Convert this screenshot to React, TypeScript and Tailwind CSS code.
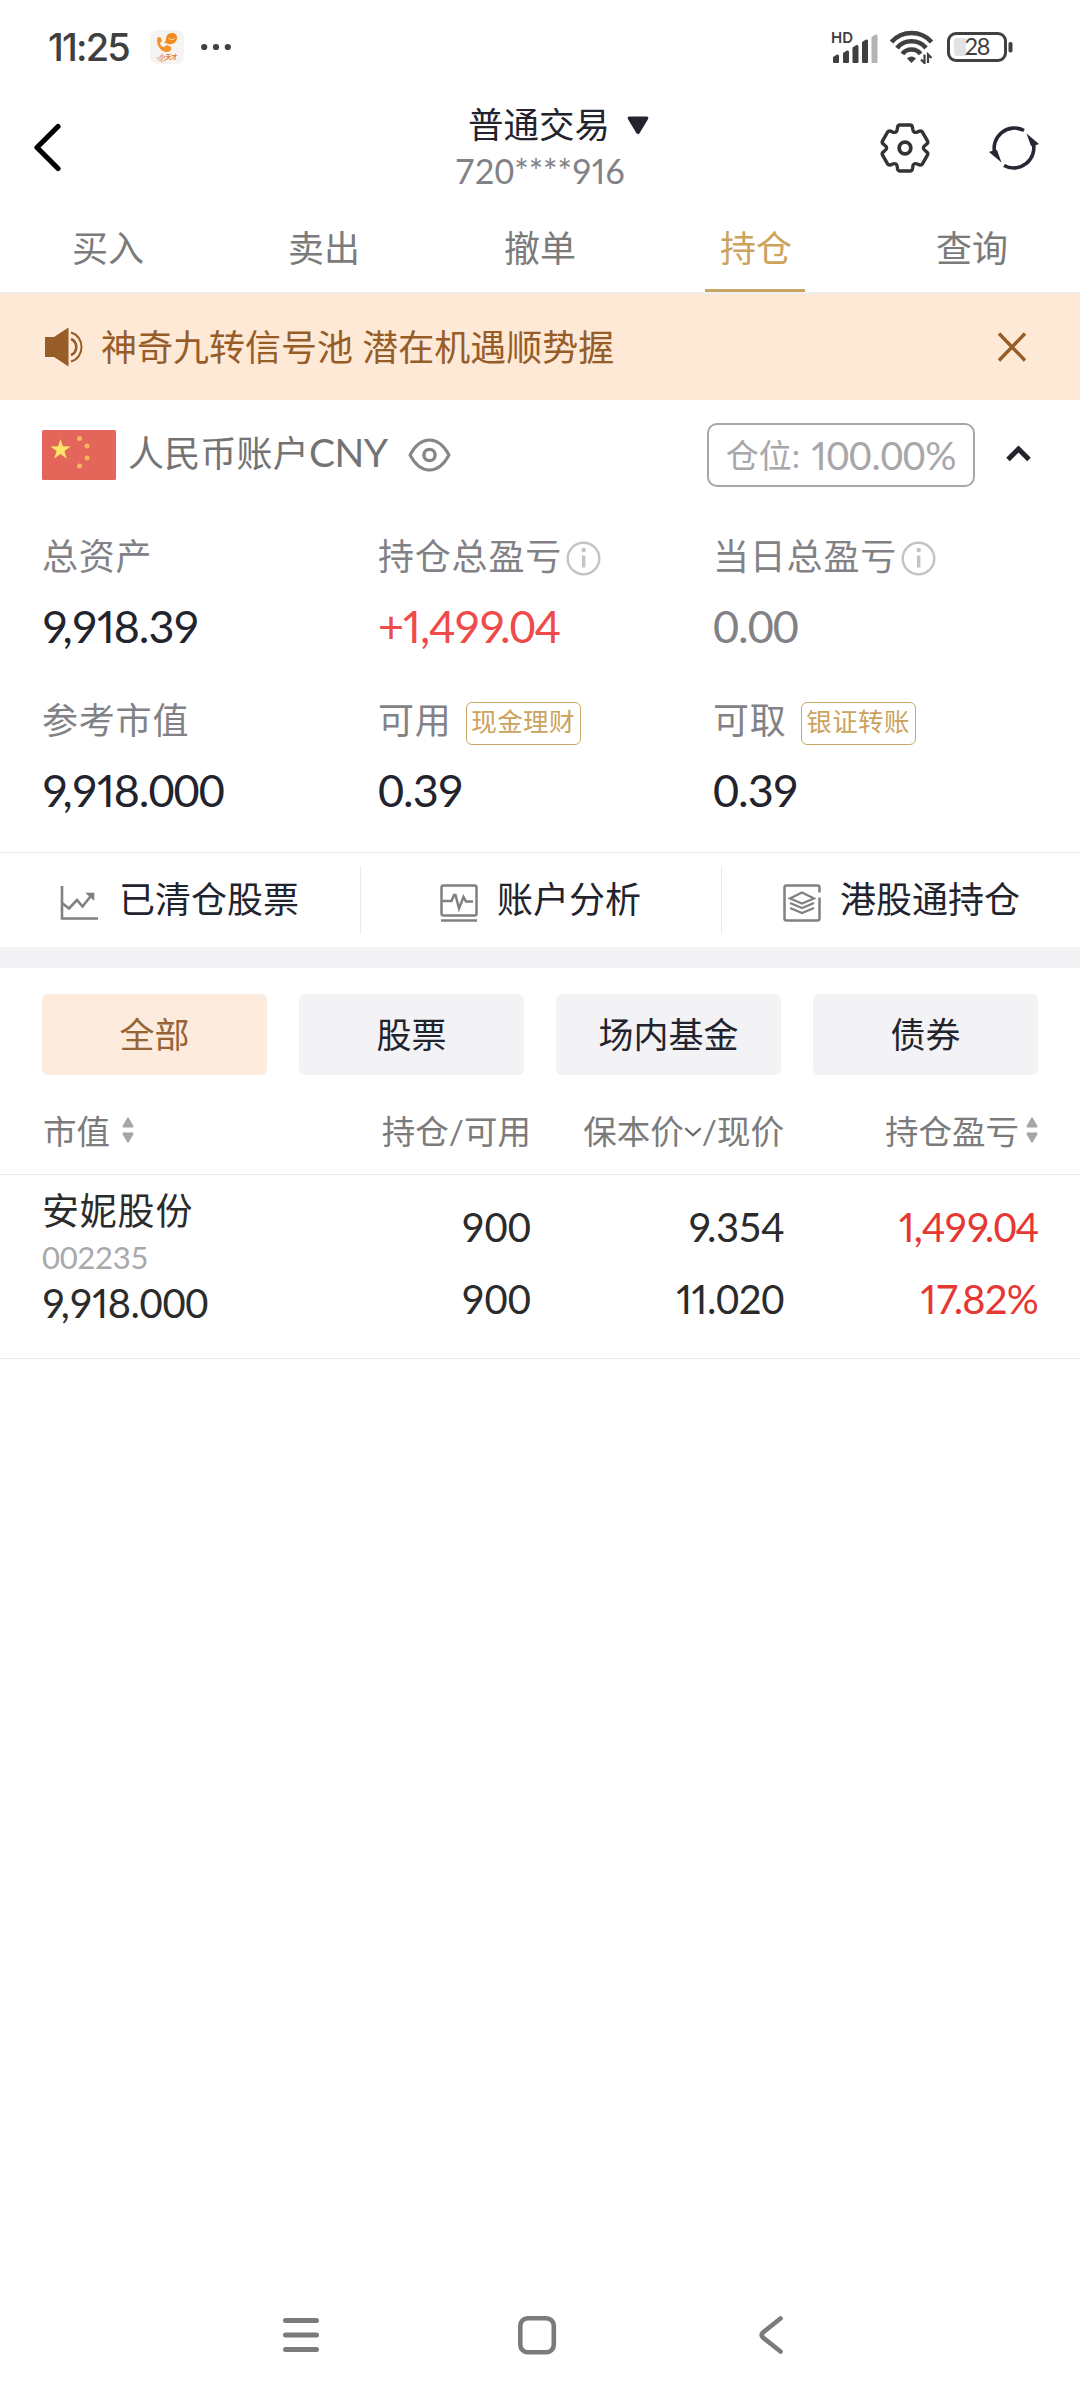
/**
 * Brokerage holdings screen: account summary, quick links and position list.
 */

import type { ReactNode } from 'react';

const TABS = ['买入', '卖出', '撤单', '持仓', '查询'];
const FILTERS = ['全部', '股票', '场内基金', '债券'];

// Outline of the six-tooth settings gear, centred on 0,0
const GEAR_PATH =
  [0, 60, 120, 180, 240, 300]
    .map((deg, i) => {
      const a = (deg * Math.PI) / 180;
      const p = (x: number, y: number) =>
        `${(x * Math.cos(a) - y * Math.sin(a)).toFixed(2)} ${(x * Math.sin(a) + y * Math.cos(a)).toFixed(2)}`;
      return `${i === 0 ? 'M' : 'L'}${p(-7.4, -21)} Q${p(-7, -23)} ${p(-5, -23)} L${p(5, -23)} Q${p(7, -23)} ${p(7.4, -21)} L${p(7.6, -19.5)} Q${p(8, -13.9)} ${p(13.09, -16.33)}`;
    })
    .join(' ') + 'Z';

// Even-width figures, except a narrow "1" and punctuation tucked under 7 and 9
function Num({ children }: { children: string }) {
  return (
    <span className="tabular-nums">
      {children.split(/(1|(?<=[79])[.,])/).map((part, i) => {
        if (i % 2 === 0) return part;
        return (
          <span key={i} className={part === '1' ? 'proportional-nums' : '-ml-[0.1em]'}>
            {part}
          </span>
        );
      })}
    </span>
  );
}

function StatusBar() {
  return (
    <div className="flex h-[94px] shrink-0 items-center pl-[48px] pr-[67px] text-[#404040]">
      <span className="w-[83px] text-[38px] font-medium leading-none tracking-[-1.8px] whitespace-nowrap font-['Inter']">
        11:25
      </span>
      <svg className="ml-[19px]" width="34" height="34" viewBox="0 0 34 34">
        <rect width="34" height="34" rx="7" fill="#f5f4f2" />
        <path d="M7 9c0-2 3-3 4-1l1 3-2 2c0 2 2 4 4 4l3-2 4 2c1 2 0 4-3 5-6 1-11-5-11-13Z" fill="#f5912b" />
        <path d="M22 3c-4 0-6 3-6 6 0 2-1 3-2 4 2 0 3 0 4 1 5 1 9-2 9-6s-2-5-5-5Z" fill="#f28a1e" />
        <path d="M18 8c2 2 5 2 7 0" fill="none" stroke="#fff3e0" strokeWidth="0.8" />
        <path d="M7 27c2 5 6 5 9 3" fill="none" stroke="#e78a35" strokeWidth="0.8" />
        <text x="9" y="29" fontSize="6.2" fontWeight="700" fill="#e17a22">
          小天才
        </text>
      </svg>
      <svg className="ml-[17px]" width="30" height="8" viewBox="0 0 30 8" fill="currentColor">
        <circle cx="3.2" cy="4" r="3.1" />
        <circle cx="15" cy="4" r="3.1" />
        <circle cx="26.8" cy="4" r="3.1" />
      </svg>

      <svg className="ml-auto overflow-visible" width="47" height="34" viewBox="0 0 47 34" fill="currentColor">
        <text x="0" y="12.5" fontSize="15" fontWeight="600" fontFamily="Inter">
          HD
        </text>
        <path d="M2 32v-5l4-2.500q2-.5 2 1.500V32q0 1-1 1H3q-1 0-1-1Z" />
        <path d="M12 32V23l4-2.500q2-.5 2 1.500V32q0 1-1 1h-4q-1 0-1-1Z" />
        <path d="M21.500 32V17.500l4-2.500q2-.5 2 1.500V32q0 1-1 1h-4q-1 0-1-1Z" />
        <path d="M31 32V12l4-2.500q2-.5 2 1.500V32q0 1-1 1h-4q-1 0-1-1Z" />
        <path d="M40.500 32V7l4-2.500q2-.5 2 1.500V32q0 1-1 1h-4q-1 0-1-1Z" opacity="0.4" />
      </svg>
      <svg className="ml-[12px]" width="43" height="34" viewBox="0 0 43 34" fill="none" stroke="currentColor">
        <path d="M1.500 12C12 0 31 0 41.500 12" strokeWidth="4.600" />
        <path d="M7 18c7-9 22-9 29 0" strokeWidth="4.600" />
        <path d="M12.500 24c4-6 14-6 18 0" strokeWidth="4.600" />
        <path d="M17 28.500q4.500-4 9 0L21.500 33Z" fill="currentColor" stroke="none" />
        <path d="M34.500 24.500v8.500l-3.500-3.500M38 33v-8.500l3.500 3.500" strokeWidth="2.200" />
      </svg>
      <svg className="ml-[14px]" width="66" height="32" viewBox="0 0 66 32">
        <rect x="1.500" y="2.500" width="57" height="27" rx="7.500" fill="none" stroke="#404040" strokeWidth="3" />
        <path d="M10 7h9v18h-9q-3 0-3-3V10q0-3 3-3Z" fill="#e2e2e2" />
        <rect x="61.500" y="11" width="4" height="10.500" rx="1.800" fill="#404040" />
        <text x="17.500" y="24" fontSize="23.500" textLength="26" fill="#404040" fontFamily="Lato">
          28
        </text>
      </svg>
    </div>
  );
}

function Header() {
  return (
    <div className="grid h-[111px] shrink-0 grid-cols-[1fr_auto_1fr] items-center pb-[3px] pl-[33px] pr-[41px]">
      <svg width="28" height="50" viewBox="0 0 28 50" fill="none" stroke="#000" strokeWidth="5.200" strokeLinecap="round" strokeLinejoin="round">
        <path d="M25 3.500 4 24.500l21 21" />
      </svg>
      <div className="flex translate-x-[4px] flex-col items-center">
        <div className="flex h-[46px] items-center gap-[17px] pl-[37px] text-[35.500px] leading-none text-[#23232e]">
          普通交易
          <svg width="22" height="19" viewBox="0 0 22 19" fill="#23232e">
            <path d="M3 0.500h16q3.500 0 1.800 3L13 16.500q-2 3-4 0L1.200 3.500Q-.5.500 3 .5Z" />
          </svg>
        </div>
        <div className="flex h-[46px] items-center text-[34px] leading-none text-[#828286]">
          <Num>720****916</Num>
        </div>
      </div>
      <div className="flex items-center justify-end gap-[58px]">
        <svg width="52" height="52" viewBox="-26 -26 52 52" fill="none" stroke="#333" strokeWidth="3.400" strokeLinejoin="round">
          <path d={GEAR_PATH} />
          <circle r="5.800" strokeWidth="3.800" />
        </svg>
        <svg width="50" height="50" viewBox="-25 -25 50 50" fill="none" stroke="#282834" strokeWidth="3.600">
          <path d="M10-17.500A20.200 20.200 0 0 0-19 6" />
          <path d="M-10 17.500A20.200 20.200 0 0 0 19-6" />
          <path d="M12.500-14.500 25-4 21-2.500 17-2ZM-12.500 14.500-25 4l4-1.500 4-.5Z" fill="#282834" stroke="none" />
        </svg>
      </div>
    </div>
  );
}

function InfoIcon() {
  return (
    <svg className="ml-[4px] mt-[4px]" width="35" height="35" viewBox="0 0 35 35" fill="none" stroke="#c4c4c6">
      <circle cx="17.500" cy="17.500" r="15.800" strokeWidth="2.400" />
      <path d="M17.700 14.500v12" strokeWidth="3.400" />
      <circle cx="17.700" cy="9" r="2.300" fill="#c4c4c6" stroke="none" />
    </svg>
  );
}

function Metric({
  label,
  value,
  extra,
  valueClass = 'text-[#23232e]',
}: {
  label: string;
  value: string;
  extra?: ReactNode;
  valueClass?: string;
}) {
  return (
    <div className="h-[164px] pt-[12px]">
      <div className="flex h-[44px] items-center text-[36px] leading-none tracking-[0.8px] text-[#828286]">
        {label}
        {extra}
      </div>
      <div className={`mt-[26px] flex h-[44px] items-center text-[45px] leading-none tracking-[-1px] ${valueClass}`}>
        <Num>{value}</Num>
      </div>
    </div>
  );
}

function Tag({ children }: { children: ReactNode }) {
  return (
    <span className="ml-[14px] mt-[7px] flex h-[43px] w-[115px] items-center justify-center rounded-md border border-[#c9a764] pb-[4px] text-[25.500px] tracking-[0.400px] text-[#cba35c]">
      {children}
    </span>
  );
}

function QuickLink({ icon, label, className }: { icon: ReactNode; label: string; className: string }) {
  return (
    <div className={`flex h-[68px] items-center text-[36px] leading-none text-[#23232e] ${className}`}>
      {icon}
      <span className="pb-[2px]">{label}</span>
    </div>
  );
}

function SortArrows({ className }: { className: string }) {
  return (
    <svg className={className} width="12" height="26" viewBox="0 0 12 26" fill="#a5a5aa">
      <path d="M6 .5q1 0 1.500 1.500l4 7q.5 1.500-1 1.500h-9q-1.500 0-1-1.500l4-7Q5 .5 6 .5ZM6 25.500q1 0 1.500-1.500l4-7q.5-1.500-1-1.500h-9q-1.500 0-1 1.500l4 7q.5 1.500 1.500 1.500Z" />
    </svg>
  );
}

function Cell({ top, bottom, className }: { top: string; bottom: string; className?: string }) {
  return (
    <div className={`flex flex-col items-end pt-[16px] text-[40px] leading-[72px] ${className ?? ''}`}>
      <Num>{top}</Num>
      <Num>{bottom}</Num>
    </div>
  );
}

export default function App() {
  return (
    <div className="flex h-[2400px] w-[1080px] flex-col overflow-hidden bg-white font-['Lato','Noto_Sans_CJK_SC',sans-serif]">
      <StatusBar />
      <Header />

      {/* Trade tabs */}
      <div className="flex h-[89px] shrink-0 border-b-2 border-[#eeeeee]">
        {TABS.map((tab) => (
          <div
            key={tab}
            className={`flex flex-1 flex-col items-center text-[36px] leading-none ${tab === '持仓' ? 'text-[#cda35e]' : 'text-[#7b7b7b]'}`}
          >
            <span className="flex h-[84px] items-center pt-[2px]">{tab}</span>
            {tab === '持仓' && <span className="mr-[2px] h-[3px] w-[100px] bg-[#cba663]" />}
          </div>
        ))}
      </div>

      {/* Promo banner */}
      <div className="flex h-[106px] shrink-0 items-center bg-[#fee9d7] pl-[44px] pr-[53px] text-[#965d28]">
        <svg width="40" height="40" viewBox="0 0 40 40" fill="none" stroke="#965d28">
          <path d="M1 10h9L24.500.5v39L10 30H1Z" fill="#965d28" stroke="none" />
          <path d="M27 5.500c14 4 14 25 0 29" strokeWidth="2" />
          <path d="M27 12c7 3 7 13 0 16" strokeWidth="2.600" />
        </svg>
        <span className="ml-[17px] text-[36px] leading-none">神奇九转信号池 潜在机遇顺势握</span>
        <svg className="ml-auto" width="30" height="30" viewBox="0 0 30 30" fill="none" stroke="#965d28" strokeWidth="3.400">
          <path d="m2 1.500 26 27M28 1.500 2 28.500" />
        </svg>
      </div>

      {/* Account line */}
      <div className="flex h-[110px] shrink-0 items-center pl-[42px] pr-[49px]">
        <svg width="74" height="50" viewBox="0 0 74 50">
          <rect width="74" height="50" rx="1.500" fill="#e4655a" />
          <path d="m18.500 9 2.400 7.300 7.600.1-6.100 4.600 2.300 7.400-6.200-4.400-6.200 4.400 2.300-7.400-6.100-4.600 7.600-.1Z" fill="#fde667" />
          <g fill="#f7b55c">
            <circle cx="37.500" cy="8.500" r="2.500" />
            <circle cx="45" cy="16" r="2.500" />
            <circle cx="45" cy="28" r="2.500" />
            <circle cx="37.500" cy="36" r="2.500" />
          </g>
        </svg>
        <span className="ml-[12px] pb-[5px] text-[36px] leading-none tracking-[0.200px] text-[#737373]">
          人民币账户<span className="text-[39px] tracking-[-0.500px]">CNY</span>
        </span>
        <svg className="ml-[20px]" width="43" height="34" viewBox="0 0 43 34" fill="none" stroke="#85858a" strokeWidth="3">
          <path d="M2 17Q10 2 21.500 2T41 17Q33 32 21.500 32T2 17Z" strokeLinejoin="round" />
          <circle cx="21.500" cy="17" r="5.600" strokeWidth="3.400" />
        </svg>
        <div className="ml-auto flex h-[64px] w-[268px] items-center justify-center rounded-[10px] border-2 border-[#a7a7aa] text-[33px] leading-none text-[#a7a7aa] whitespace-pre">
          仓位:{' '}
          <span className="ml-[3px] text-[39px] tracking-[-0.200px]">
            <Num>100.00%</Num>
          </span>
        </div>
        <svg className="mb-[3px] ml-[31px]" width="25" height="17" viewBox="0 0 25 17" fill="none" stroke="#23232e" strokeWidth="5">
          <path d="m2 14.500 10.500-10.500L23 14.500" />
        </svg>
      </div>

      {/* Balances */}
      <div className="grid shrink-0 grid-cols-[336px_335px_1fr] pb-[2px] pl-[42px] pt-[12px]">
        <Metric label="总资产" value="9,918.39" />
        <Metric label="持仓总盈亏" value="+1,499.04" extra={<InfoIcon />} valueClass="text-[#f04b4b]" />
        <Metric label="当日总盈亏" value="0.00" extra={<InfoIcon />} valueClass="text-[#828286]" />
        <Metric label="参考市值" value="9,918.000" />
        <Metric label="可用" value="0.39" extra={<Tag>现金理财</Tag>} />
        <Metric label="可取" value="0.39" extra={<Tag>银证转账</Tag>} />
      </div>

      {/* Quick links */}
      <div className="grid h-[95px] shrink-0 grid-cols-[361px_361px_1fr] items-center border-t border-[#eaeaea]">
        <QuickLink
          className="gap-[20px] border-r border-[#eaeaea] pl-[60px]"
          label="已清仓股票"
          icon={
            <svg className="mt-[5px]" width="39" height="36" viewBox="0 0 39 36" fill="none" stroke="#808084" strokeWidth="2.600">
              <path d="M2 1v32.500h36" />
              <path d="m2 18 7 5.500L17 15l5.500 6.500L32 9.500" />
              <path d="M28.500 9h4.500v4Z" fill="#808084" />
            </svg>
          }
        />
        <QuickLink
          className="gap-[19px] border-r border-[#eaeaea] pl-[79px]"
          label="账户分析"
          icon={
            <svg className="mt-[5px]" width="38" height="38" viewBox="0 0 38 38" fill="none" stroke="#808084" strokeWidth="2.500">
              <rect x="1.500" y="1.500" width="35" height="30" rx="2" />
              <path d="M1 36.500h36" />
              <path d="M2 17h9.500l2.500-6h1.500l3.500 13.500L23.500 13l2.500 4.500h7" />
            </svg>
          }
        />
        <QuickLink
          className="gap-[19px] pl-[61px]"
          label="港股通持仓"
          icon={
            <svg className="mt-[5px]" width="38" height="38" viewBox="0 0 38 38" fill="none" stroke="#808084" strokeWidth="2.500">
              <path d="M36.500 8.500v-5q0-2-2-2h-31q-2 0-2 2v31q0 2 2 2h31q2 0 2-2V13.500" />
              <path d="m19 8.500 12 6-12 5-12-5ZM7 19l12 5 12-5M7 24l12 5 12-5" strokeWidth="2.200" />
            </svg>
          }
        />
      </div>
      <div className="h-[21px] shrink-0 bg-[#f3f3f5]" />

      {/* Type filters */}
      <div className="grid shrink-0 grid-cols-4 gap-[32px] px-[42px] pt-[26px]">
        {FILTERS.map((name, i) => (
          <div
            key={name}
            className={`flex h-[81px] items-center justify-center rounded-md text-[35px] leading-none ${
              i === 0 ? 'bg-[#fdebdd] text-[#966337]' : 'bg-[#f3f3f6] text-[#23232e]'
            }`}
          >
            {name}
          </div>
        ))}
      </div>

      {/* Holdings table */}
      <div className="grid h-[100px] shrink-0 grid-cols-[278px_253px_253px_254px] items-center border-b border-[#ececec] pt-[14px] text-[33.500px] leading-none text-[#7b7b7b]">
        <div className="flex items-center pl-[43px]">
          市值
          <SortArrows className="mb-[4px] ml-[12px]" />
        </div>
        <div className="text-right">持仓/可用</div>
        <div className="flex items-center justify-end">
          保本价
          <svg width="18" height="12" viewBox="0 0 19 12" fill="none" stroke="#666" strokeWidth="2.400">
            <path d="m1.500 2 8 7.500 8-7.500" />
          </svg>
          /现价
        </div>
        <div className="flex items-center justify-end">
          持仓盈亏
          <SortArrows className="mb-[4px] ml-[7px]" />
        </div>
      </div>
      <div className="grid h-[184px] shrink-0 grid-cols-[278px_253px_253px_254px] border-b border-[#ececec] text-[#2b2b2b]">
        <div className="flex flex-col pl-[42px] pt-[14px]">
          <span className="text-[37px] leading-[44px] tracking-[0.800px]">安妮股份</span>
          <span className="text-[31px] leading-[48px] tracking-[-0.300px] text-[#a9a9ad]">
            <Num>002235</Num>
          </span>
          <span className="text-[40px] leading-[44px] tracking-[-0.400px]">
            <Num>9,918.000</Num>
          </span>
        </div>
        <Cell top="900" bottom="900" />
        <Cell top="9.354" bottom="11.020" className="tracking-[-0.500px]" />
        <Cell top="1,499.04" bottom="17.82%" className="tracking-[-0.900px] text-[#e53833]" />
      </div>

      {/* System navigation */}
      <div className="mt-auto flex h-[130px] shrink-0 items-center pl-[282px]">
        <svg width="38" height="36" viewBox="0 0 38 36" stroke="#7b7b7b" strokeWidth="5" strokeLinecap="round">
          <path d="M3.500 3.500h31M3.500 18h31M3.500 32.500h31" />
        </svg>
        <svg className="ml-[197px]" width="40" height="40" viewBox="0 0 40 40" fill="none" stroke="#7b7b7b" strokeWidth="4.600">
          <rect x="3.300" y="3.300" width="33.500" height="34" rx="7.500" />
        </svg>
        <svg className="ml-[201px]" width="26" height="40" viewBox="0 0 26 40" fill="none" stroke="#7b7b7b" strokeWidth="4.600" strokeLinecap="round">
          <path d="M22.500 3.500 5 17.500q-2.500 2.500 0 5L22.500 36.500" />
        </svg>
      </div>
    </div>
  );
}
